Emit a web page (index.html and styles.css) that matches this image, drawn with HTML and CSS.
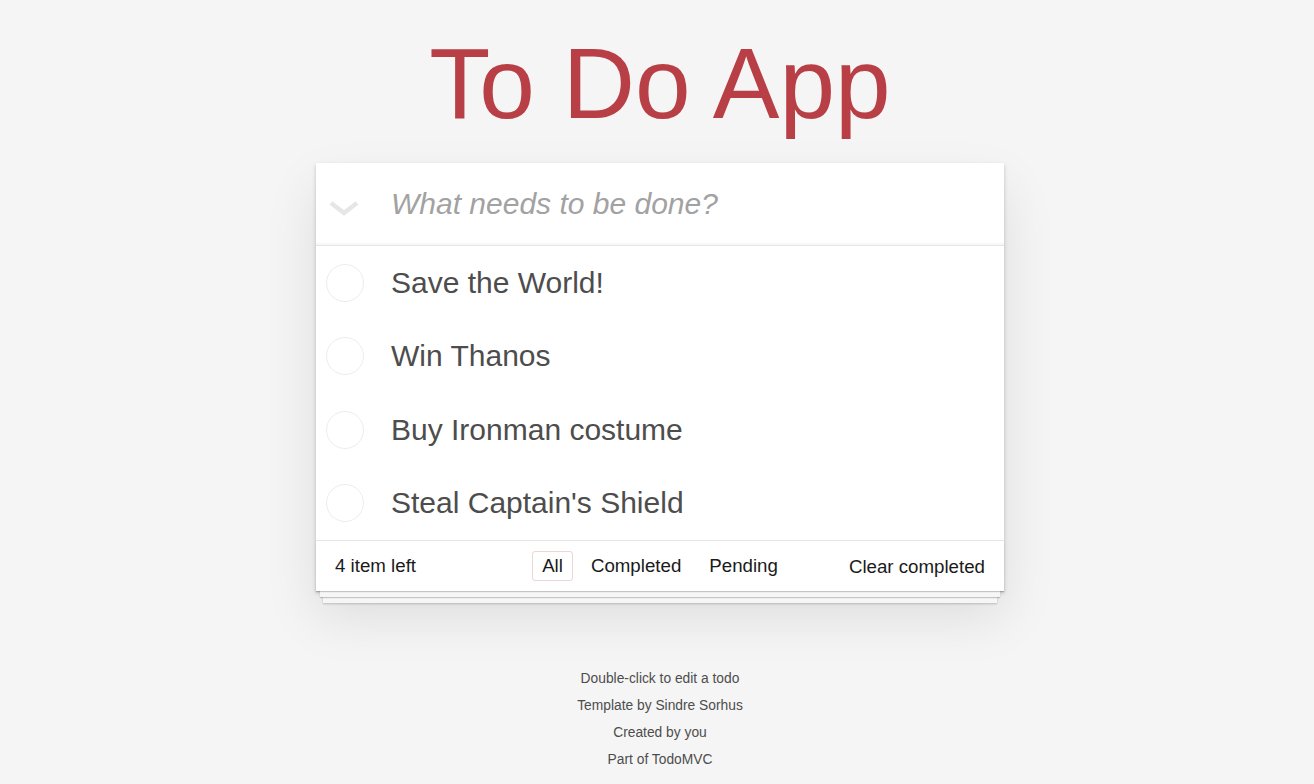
FILE: index.html
```html
<!DOCTYPE html>
<html lang="en">
<head>
<meta charset="utf-8">
<title>To Do App</title>
<link rel="stylesheet" href="styles.css">
</head>
<body>
<div class="page">
  <h1 class="title">To Do App</h1>
  <section class="todoapp">
    <header class="new-row">
      <span class="toggle-all">
        <svg width="30" height="16" viewBox="0 0 30 16"><polyline points="2,2 15,12 28,2" fill="none" stroke="#e6e6e6" stroke-width="4.5"/></svg>
      </span>
      <input class="new-todo" type="text" placeholder="What needs to be done?">
    </header>
    <ul class="todo-list">
      <li class="todo"><span class="check"></span><span class="label">Save the World!</span></li>
      <li class="todo"><span class="check"></span><span class="label">Win Thanos</span></li>
      <li class="todo"><span class="check"></span><span class="label">Buy Ironman costume</span></li>
      <li class="todo"><span class="check"></span><span class="label">Steal Captain's Shield</span></li>
    </ul>
    <footer class="footer">
      <span class="count">4 item left</span>
      <ul class="filters">
        <li><a class="filter selected">All</a></li>
        <li><a class="filter">Completed</a></li>
        <li><a class="filter">Pending</a></li>
      </ul>
      <span class="clear">Clear completed</span>
    </footer>
  </section>
  <footer class="info">
    <p>Double-click to edit a todo</p>
    <p>Template by Sindre Sorhus</p>
    <p>Created by you</p>
    <p>Part of TodoMVC</p>
  </footer>
</div>
</body>
</html>
```

FILE: styles.css
```css
html, body {
  margin: 0;
  padding: 0;
}
body {
  background: #f5f5f5;
  font-family: "Liberation Sans", Arial, sans-serif;
  color: #4d4d4d;
}
.page {
  display: flex;
  flex-direction: column;
  align-items: center;
  padding-left: 6px;
}
.title {
  margin: 33px 0 30px;
  font-size: 100px;
  line-height: 100px;
  font-weight: normal;
  color: #b83f45;
  text-align: center;
}
.todoapp {
  position: relative;
  width: 688px;
  background: #fff;
  box-shadow: 0 2px 4px rgba(0,0,0,0.2), 0 25px 50px rgba(0,0,0,0.1);
}
.new-row {
  display: flex;
  align-items: center;
  height: 82px;
  box-shadow: inset 0 -2px 1px rgba(0,0,0,0.03);
}
.toggle-all {
  width: 56px;
  display: flex;
  justify-content: center;
  padding-top: 10px;
}
.toggle-all svg {
  display: block;
}
.new-todo {
  flex: 1;
  border: 0;
  outline: none;
  background: transparent;
  margin: 0 0 0 19px;
  padding: 0;
  height: 82px;
  font-family: "Liberation Sans", Arial, sans-serif;
  font-size: 30px;
  color: #4d4d4d;
}
.new-todo::placeholder {
  font-style: italic;
  color: #a2a2a2;
}
.todo-list {
  list-style: none;
  margin: 0;
  padding: 0;
  border-top: 1px solid #e6e6e6;
}
.todo {
  display: flex;
  align-items: center;
  height: 73.5px;
}
.check {
  box-sizing: border-box;
  width: 38px;
  height: 38px;
  margin-left: 10px;
  border: 1px solid #ededed;
  border-radius: 50%;
}
.label {
  margin-left: 27px;
  font-size: 30px;
  color: #4d4d4d;
}
.footer {
  position: relative;
  display: grid;
  grid-template-columns: 1fr auto 1fr;
  align-items: center;
  height: 50px;
  padding: 0 19px;
  border-top: 1px solid #e6e6e6;
  font-size: 18.7px;
  color: #1a1a1a;
}
.footer::before {
  content: "";
  position: absolute;
  left: 0;
  right: 0;
  bottom: 0;
  height: 50px;
  box-shadow: 0 1px 1px rgba(0,0,0,0.2),
    0 10px 0 -4px #f6f6f6,
    0 11px 1px -4px rgba(0,0,0,0.2),
    0 19px 0 -7px #f6f6f6,
    0 20px 2px -7px rgba(0,0,0,0.2);
}
.count {
  justify-self: start;
}
.clear {
  justify-self: end;
  padding-top: 2px;
}
.filters {
  display: flex;
  list-style: none;
  margin: 0;
  padding: 0;
}
.filter {
  display: block;
  margin: 0 4px;
  padding: 4px 9px;
  border: 1px solid transparent;
  border-radius: 3px;
  line-height: 20px;
  color: #1a1a1a;
}
.filter.selected {
  border-color: rgba(175,47,47,0.2);
}
.info {
  margin-top: 73.5px;
  text-align: center;
  font-size: 13.8px;
  color: #4d4d4d;
}
.info p {
  margin: 0;
  line-height: 27px;
}
```
